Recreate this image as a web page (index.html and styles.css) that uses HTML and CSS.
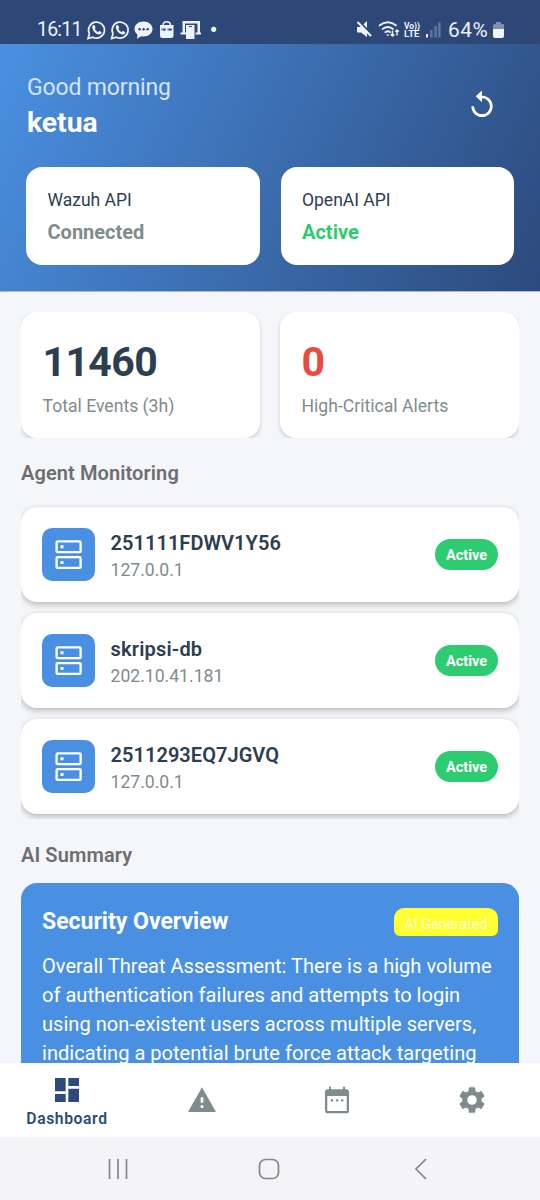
FILE: index.html
```html
<!DOCTYPE html>
<html lang="en">
<head>
<meta charset="utf-8">
<title>Dashboard</title>
<link rel="stylesheet" href="styles.css">
</head>
<body>
<div class="phone">
  <div class="statusbar">
    <span class="clock">16:11</span>
    <svg class="notif" width="134" height="24" viewBox="0 0 134 24">
      <g fill="none" stroke="#eef3fb" stroke-width="1.7">
        <path d="M2 20.500l1.400-4.700A8 8 0 1 1 6.800 19.200z"/>
        <path d="M25.600 20.500l1.400-4.700A8 8 0 1 1 30.400 19.200z"/>
      </g>
      <g fill="#eef3fb">
        <path d="M6.500 7.600c.9-1 1.900-.8 2.300.1l.7 1.700c.2.600-.9 1.200-.6 1.700.7 1.400 1.600 2.300 3 2.900.5.100 1.100-1.300 1.600-1l1.900 1c.8.500-.4 2.200-1.500 2.500-3.500.8-8.900-4.600-7.400-8.900z"/>
        <path d="M30.100 7.600c.9-1 1.900-.8 2.300.1l.7 1.700c.2.600-.9 1.200-.6 1.700.7 1.400 1.600 2.300 3 2.900.5.100 1.100-1.300 1.600-1l1.900 1c.8.500-.4 2.200-1.500 2.500-3.500.8-8.900-4.600-7.400-8.900z"/>
        <path d="M57.500 3.500c5.200 0 9 3.300 9 7.500s-3.800 7.500-9 7.500c-.8 0-1.600-.1-2.300-.3l-4.200 2.600.5-4.200C49.500 15 48.500 13.100 48.500 11c0-4.200 3.800-7.500 9-7.500z"/>
        <path d="M74 7h13.500v10.500q0 2.500-2.500 2.500h-8.500q-2.500 0-2.500-2.500z"/>
        <path d="M97.500 3h16v2.500h-16zM96.500 3h2.500v12h-2.500zM111.500 3h2.500v12h-2.500zM94.500 14.500h6v2h-6zM109.500 14.500h5.500v2h-5.500zM100 7h8.500v14H100z"/>
        <circle cx="127.700" cy="11.300" r="2.600"/>
      </g>
      <path d="M77 7.500c0-5 7.500-5 7.500 0" fill="none" stroke="#eef3fb" stroke-width="1.500"/>
      <path d="M75.500 10.300h4.600v2.400h-4.600zM81.500 10.300h4.600v2.400h-4.600z" fill="#8090b0"/>
      <path d="M77 11h2v1.200h-2zM83 11h2v1.200h-2z" fill="#2d4877"/>
      <g fill="#2d4877"><circle cx="53.600" cy="11.200" r="1.200"/><circle cx="57.600" cy="11.200" r="1.200"/><circle cx="61.600" cy="11.200" r="1.200"/><path d="M103 8h3v1h-3z"/></g>
    </svg>
    <svg class="signals" width="90" height="24" viewBox="0 0 90 24">
      <path d="M2 9h3.500l6.500-6v16l-6-4.500H2z" fill="#eef3fb"/>
      <path d="M3.500 2.500l14 15" stroke="#2d4877" stroke-width="2"/>
      <path d="M2.500 4l13.500 14" stroke="#eef3fb" stroke-width="2"/>
      <g fill="none" stroke="#eef3fb" stroke-width="1.900"><path d="M24 7.800q8.800-7 17.600 0M27 11.400q5.800-5 11.600 0M29.800 14.600q3-2.700 6 0"/><path d="M37.500 12.500v5.500m-1.800-1.800l1.800 1.800 1.800-1.800M42 17.500v-5.500m-1.800 1.800l1.800-1.800 1.800 1.800" stroke-width="1.400"/></g>
      <path d="M31 16.500h3.500l-1.700 1.700z" fill="#eef3fb"/>
      <text x="49" y="10.700" class="volte" textLength="16" lengthAdjust="spacingAndGlyphs">Vo))</text>
      <text x="49" y="19" class="volte" textLength="15.500" lengthAdjust="spacingAndGlyphs">LTE</text>
      <g fill="#64779a"><path d="M75.200 12h2.400v7.500h-2.400zM79.400 8h2.400v11.500h-2.400zM83.200 4.500h2.400v15h-2.400z"/><path d="M71 16h2v3.500h-2z" fill="#eef3fb"/></g>
    </svg>
    <span class="percent">64%</span>
    <svg class="battery" width="11" height="17" viewBox="0 0 11 17"><path d="M3 0h5v2h2q1 0 1 1v5H0V3q0-1 1-1h2z" fill="#7e8eac"/><path d="M0 7h11v7q0 2-2 2H2q-2 0-2-2z" fill="#f3f6fb"/></svg>
  </div>

  <header class="hero">
    <div class="hero-top">
      <div>
        <div class="greeting">Good morning</div>
        <div class="username">ketua</div>
      </div>
      <svg class="refresh" width="32" height="32" viewBox="0 0 24 24" fill="#fff"><path d="M12 5V1.200L7.300 5.500 12 10V7a6 6 0 1 1-6 6H4a8 8 0 1 0 8-8z"/></svg>
    </div>
    <div class="api-row">
      <div class="api-card"><div class="api-name">Wazuh API</div><div class="api-state">Connected</div></div>
      <div class="api-card"><div class="api-name">OpenAI API</div><div class="api-state ok">Active</div></div>
    </div>
  </header>

  <main class="content">
    <section class="stats">
      <div class="stat-card"><div class="stat-value">11460</div><div class="stat-label">Total Events (3h)</div></div>
      <div class="stat-card"><div class="stat-value critical">0</div><div class="stat-label">High-Critical Alerts</div></div>
    </section>

    <h2 class="section-title">Agent Monitoring</h2>
    <section class="agents">
      <div class="agent">
        <div class="agent-icon"><svg width="32" height="32" viewBox="0 0 32 32"><g fill="none" stroke="#fff" stroke-width="2.300"><rect x="3.600" y="2.400" width="24" height="10.800" rx="1"/><rect x="3.600" y="18.100" width="24" height="10.800" rx="1"/></g><path d="M7.500 6.300h3v3h-3zM7.500 22h3v3h-3z" fill="#fff"/></svg></div>
        <div class="agent-text"><div class="agent-name serial">251111FDWV1Y56</div><div class="agent-ip">127.0.0.1</div></div>
        <span class="pill">Active</span>
      </div>
      <div class="agent">
        <div class="agent-icon"><svg width="32" height="32" viewBox="0 0 32 32"><g fill="none" stroke="#fff" stroke-width="2.300"><rect x="3.600" y="2.400" width="24" height="10.800" rx="1"/><rect x="3.600" y="18.100" width="24" height="10.800" rx="1"/></g><path d="M7.500 6.300h3v3h-3zM7.500 22h3v3h-3z" fill="#fff"/></svg></div>
        <div class="agent-text"><div class="agent-name">skripsi-db</div><div class="agent-ip">202.10.41.181</div></div>
        <span class="pill">Active</span>
      </div>
      <div class="agent">
        <div class="agent-icon"><svg width="32" height="32" viewBox="0 0 32 32"><g fill="none" stroke="#fff" stroke-width="2.300"><rect x="3.600" y="2.400" width="24" height="10.800" rx="1"/><rect x="3.600" y="18.100" width="24" height="10.800" rx="1"/></g><path d="M7.500 6.300h3v3h-3zM7.500 22h3v3h-3z" fill="#fff"/></svg></div>
        <div class="agent-text"><div class="agent-name serial">2511293EQ7JGVQ</div><div class="agent-ip">127.0.0.1</div></div>
        <span class="pill">Active</span>
      </div>
    </section>

    <h2 class="section-title summary-title">AI Summary</h2>
    <section class="summary">
      <div class="summary-head"><div class="summary-name">Security Overview</div><span class="tag">AI Generated</span></div>
      <p class="summary-text">Overall Threat Assessment: There is a high volume<br>of authentication failures and attempts to login<br>using non-existent users across multiple servers,<br>indicating a potential brute force attack targeting</p>
    </section>
  </main>

  <nav class="tabs">
    <div class="tab active">
      <svg width="32" height="32" viewBox="0 0 24 24" fill="#2c4a7c"><path d="M3 13h8V3H3v10zm0 8h8v-6H3v6zm10 0h8V11h-8v10zm0-18v6h8V3h-8z"/></svg>
      <span>Dashboard</span>
    </div>
    <div class="tab"><svg width="32" height="32" viewBox="0 0 24 24" fill="#7f8c8d"><path d="M1.500 21h21L12 2.500zM13 18h-2v-2h2zm0-4h-2v-4h2z"/></svg></div>
    <div class="tab"><svg width="32" height="32" viewBox="0 0 24 24" fill="#7f8c8d"><path d="M19 4h-1V2h-1.500v2h-9V2H6v2H5a2 2 0 0 0-2 2v14c0 1.100.9 2 2 2h14a2 2 0 0 0 2-2V6a2 2 0 0 0-2-2zm.3 16.300H4.700V9h14.600zM7.300 11.500H9v1.700H7.300zm3.900 0h1.700v1.700h-1.700zm3.900 0h1.700v1.700h-1.700z"/></svg></div>
    <div class="tab"><svg width="32" height="32" viewBox="0 0 24 24" fill="#7f8c8d"><path d="M19.140 12.940c.04-.3.060-.61.060-.94s-.02-.64-.07-.94l2.030-1.580a.49.49 0 0 0 .12-.61l-1.920-3.320a.49.49 0 0 0-.59-.22l-2.390.96a7 7 0 0 0-1.620-.94l-.36-2.540A.48.480 0 0 0 13.920 2.400h-3.840a.48.480 0 0 0-.47.410l-.36 2.540c-.59.240-1.130.57-1.620.94l-2.390-.96a.49.490 0 0 0-.59.220L2.740 8.870a.48.480 0 0 0 .12.610l2.030 1.580c-.05.300-.09.630-.09.940s.02.640.07.940l-2.030 1.580a.49.490 0 0 0-.12.610l1.920 3.320c.12.220.37.290.59.220l2.390-.96c.5.380 1.030.700 1.620.940l.36 2.540c.05.240.24.410.48.410h3.840c.24 0 .44-.17.470-.41l.36-2.540c.59-.24 1.130-.56 1.620-.94l2.390.96c.22.080.47 0 .59-.22l1.920-3.320a.48.480 0 0 0-.12-.61zM12 15.600a3.600 3.600 0 1 1 0-7.200 3.600 3.600 0 0 1 0 7.200z"/></svg></div>
  </nav>

  <footer class="sysnav">
    <svg width="22" height="22" viewBox="0 0 22 22" stroke="#858587" stroke-width="1.700"><path d="M2.500 1v20M11 1v20M19.500 1v20"/></svg>
    <svg width="22" height="22" viewBox="0 0 22 22" fill="none" stroke="#858587" stroke-width="1.700"><rect x="1.500" y="1.500" width="19" height="19" rx="6"/></svg>
    <svg width="22" height="22" viewBox="0 0 22 22" fill="none" stroke="#858587" stroke-width="1.700"><path d="M17 1L7 11l10 10"/></svg>
  </footer>
</div>
</body>
</html>
```
FILE: styles.css
```css
* { box-sizing: border-box; }
body { margin: 0; font-family: Roboto, sans-serif; background: #f5f6fa; }
svg { display: block; flex: none; }
.phone { width: 540px; height: 1200px; display: flex; flex-direction: column; overflow: hidden; }

.statusbar { height: 44px; flex: none; background: #2d4877; display: flex; align-items: center; padding: 16px 0 0 37px; color: #eef3fb; }
.clock { width: 49px; font-size: 19.500px; line-height: 24px; letter-spacing: -0.800px; }
.signals { margin-left: 135px; }
.volte { font-size: 9px; font-weight: 700; fill: #eef3fb; }
.percent { width: 45px; margin-left: 3px; font-size: 20.800px; line-height: 24px; letter-spacing: 0.600px; }

.hero { height: 248px; flex: none; padding: 28px 26px 0; background: linear-gradient(114.600deg, #4a90e2, #2c4a7c); color: #fff; border-bottom: 1px solid #a9b9d6; }
.hero-top { display: flex; justify-content: space-between; height: 95px; padding-left: 1px; }
.greeting { font-size: 23px; line-height: 32px; letter-spacing: -0.150px; color: #d2e5fb; }
.username { font-size: 28.300px; line-height: 37px; font-weight: 700; }
.refresh { margin: 17px 16px 0 0; }
.api-row { display: flex; gap: 21px; }
.api-card { flex: 1; height: 98px; padding: 21px 21.500px; background: #fff; border-radius: 16px; }
.api-name { font-size: 17.500px; line-height: 25px; color: #2c3e50; }
.api-state { margin-top: 5px; font-size: 20px; line-height: 28px; font-weight: 700; color: #7f8c8d; }
.api-state.ok { color: #2ecc71; }

.content { flex: 1; min-height: 0; overflow: hidden; padding: 20px 21px 0; }
.stats { display: flex; gap: 20px; height: 126px; overflow: hidden; }
.stat-card { flex: 1; height: 126px; padding: 23px 21.500px; background: #fff; border-radius: 16px; box-shadow: 0 2px 4px rgba(0,0,0,.17); }
.stat-value { font-size: 41px; line-height: 54px; font-weight: 700; letter-spacing: -0.600px; color: #2c3e50; }
.stat-value.critical { color: #e74c3c; }
.stat-label { margin-top: 6px; font-size: 17.600px; line-height: 23px; color: #7f8c8d; }
.section-title { margin: 20px 0 0; font-size: 20px; line-height: 30px; font-weight: 600; letter-spacing: 0.100px; color: #6d6e72; }
.agents { margin-top: 16px; height: 315px; padding: 3px 0; display: flex; flex-direction: column; gap: 11px; overflow: hidden; }
.agent { height: 95px; flex: none; padding: 0 21px; display: flex; align-items: center; background: #fff; border-radius: 16px; box-shadow: 0 3px 6px rgba(0,0,0,.22), 0 0 4px rgba(0,0,0,.06); }
.agent-icon { width: 53px; height: 53px; display: grid; place-items: center; border-radius: 10px; background: #4a90e2; }
.agent-text { flex: 1; padding: 3px 0 0 15.500px; }
.agent-name { font-size: 20px; line-height: 28px; font-weight: 600; letter-spacing: 0.200px; color: #2c3e50; }
.agent-name.serial { letter-spacing: 0.050px; }
.agent-ip { font-size: 17.600px; line-height: 26px; color: #7f8c8d; }
.pill { width: 63px; height: 31px; border-radius: 16px; background: #2ecc71; color: #fff; font-size: 14.500px; line-height: 33px; font-weight: 700; text-align: center; }
.summary-title { margin-top: 21px; }
.summary { margin-top: 13px; height: 300px; padding: 22px 21px; border-radius: 16px 16px 0 0; background: #4a90e2; color: #fff; }
.summary-head { display: flex; justify-content: space-between; height: 47px; }
.summary-name { font-size: 23px; line-height: 34px; font-weight: 700; }
.tag { width: 104px; height: 28px; margin-top: 3px; border-radius: 10px 10px 6px 6px; background: #ff3; color: #fffdd0; font-size: 14.500px; line-height: 33px; text-align: center; overflow: hidden; white-space: nowrap; }
.summary-text { margin: 0; font-size: 20.080px; line-height: 29px; white-space: nowrap; }

.tabs { height: 74px; flex: none; display: grid; grid-template-columns: repeat(4, 1fr); background: #fff; }
.tab { display: flex; flex-direction: column; align-items: center; justify-content: center; padding-right: 1px; }
.tab.active { justify-content: flex-start; padding-top: 11px; color: #2c4a7c; font-size: 15.700px; line-height: 26px; font-weight: 600; letter-spacing: 0.600px; }
.sysnav { height: 63px; flex: none; display: grid; grid-template-columns: 22px 22px 22px; column-gap: 129px; justify-content: center; align-items: center; padding-right: 2px; background: #f4f4f7; }
```
